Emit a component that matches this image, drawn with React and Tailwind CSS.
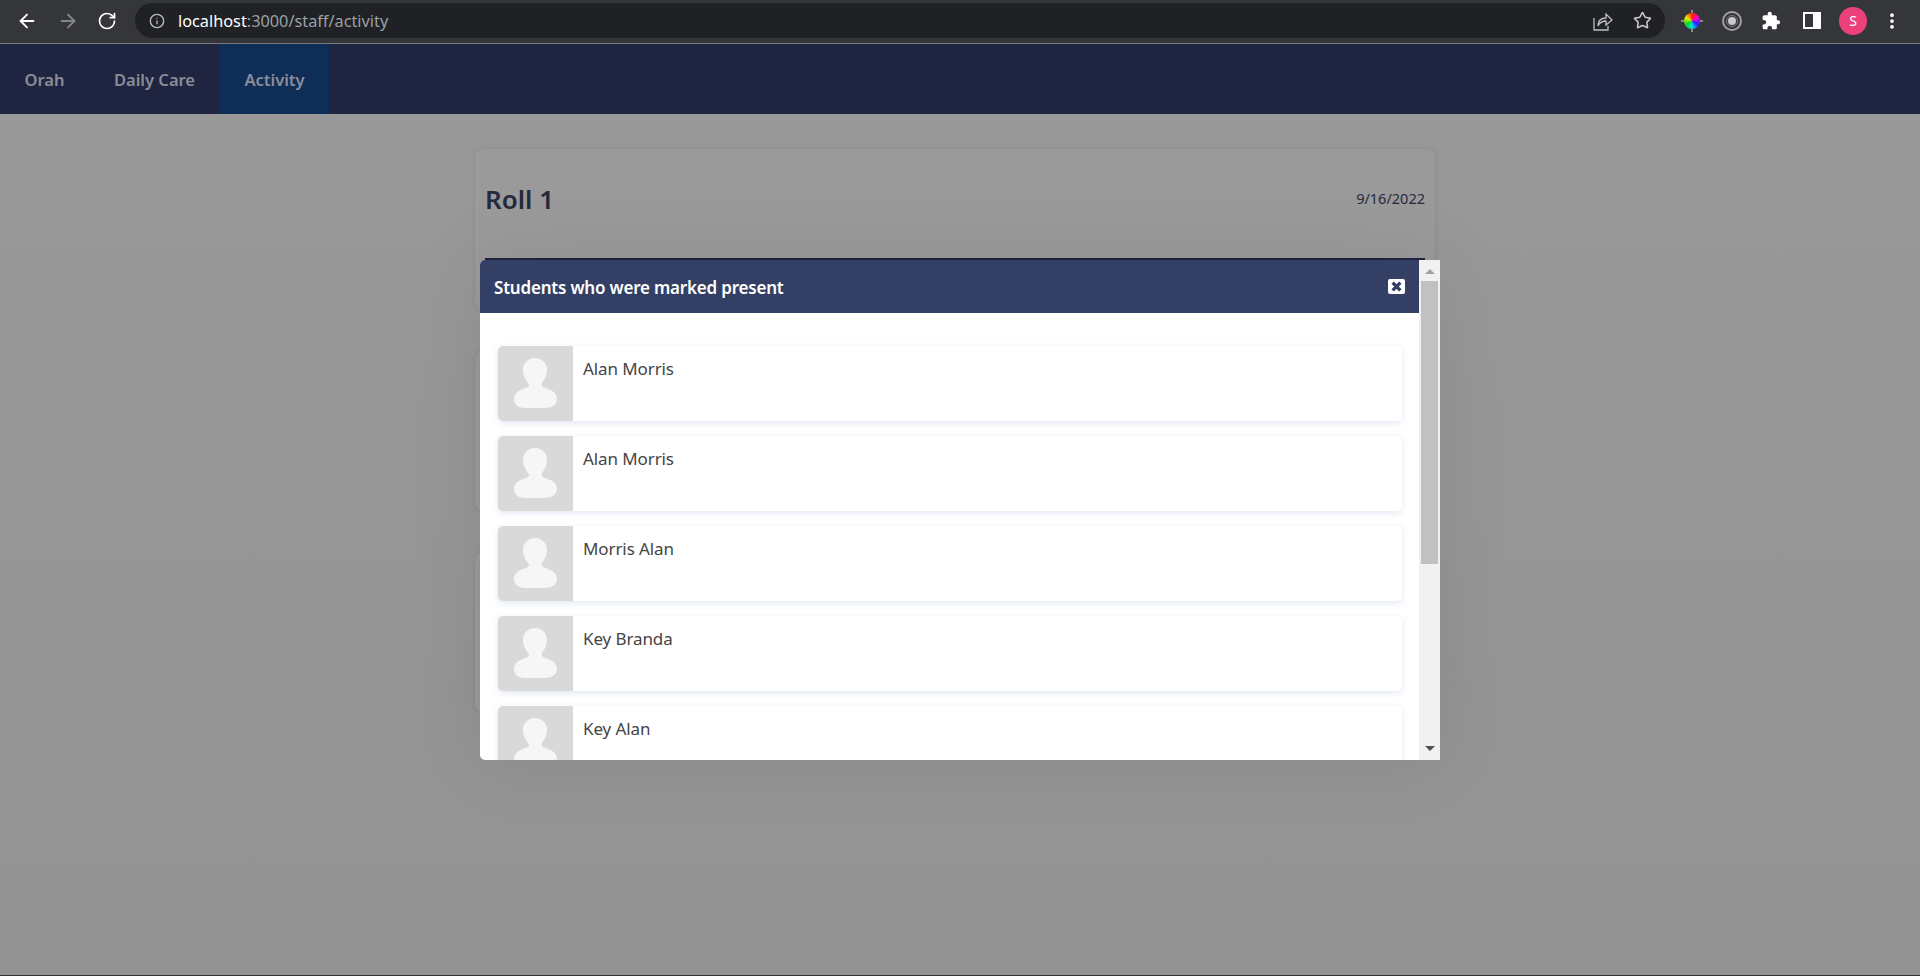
import React from 'react'
import { ArrowLeft, ArrowRight, RotateCw, Info, Star, EllipsisVertical } from 'lucide-react'
import { MdExtension } from 'react-icons/md'

const students = ['Alan Morris', 'Alan Morris', 'Morris Alan', 'Key Branda', 'Key Alan']

const Avatar = () => (
  <svg viewBox="0 0 75 75" className="w-[75px] h-[75px] shrink-0 rounded-l-[5px] bg-[#d9d9d9]">
    <path
      d="M37 12C44 12 49 17 49 24C49 30 46 34 44 37C43 39 44 41 47 42C54 44 59 47 59 53C59 59 53 62 47 62H27C21 62 16 59 16 53C16 47 21 44 28 42C31 41 32 39 30 37C28 34 25 30 25 24C25 17 30 12 37 12Z"
      fill="#f6f6f6"
    />
  </svg>
)

const StudentRow = ({ name }) => (
  <div className="flex h-[75px] shrink-0 rounded-[5px] bg-white shadow-[0_2px_7px_rgba(90,120,190,0.18)]">
    <Avatar />
    <p className="pl-[10px] pt-[9px] text-[17px] leading-[28px] tracking-[-0.1px] text-[#444]">{name}</p>
  </div>
)

const ColorWheel = () => (
  <div className="relative h-[16px] w-[16px] rounded-full bg-[conic-gradient(#f20,#f0c,#22f,#0dd,#0d2,#ee0,#f20)]">
    <span className="absolute left-[7px] top-[-3px] h-[3px] w-[2px] bg-[#8a8a8a]" />
    <span className="absolute left-[7px] bottom-[-3px] h-[3px] w-[2px] bg-[#8a8a8a]" />
    <span className="absolute left-[-3px] top-[7px] h-[2px] w-[3px] bg-[#8a8a8a]" />
    <span className="absolute right-[-3px] top-[7px] h-[2px] w-[3px] bg-[#8a8a8a]" />
  </div>
)

const ShareIcon = () => (
  <svg viewBox="0 0 20 20" fill="none" stroke="#bcbec1" strokeWidth="1.300" className="h-[20px] w-[20px]">
    <path d="M1 7v12h14v-4" />
    <path d="M5 15c0-5 3-8 8-8V3l6 6-6 5v-4c-4 0-6 1-8 5z" />
  </svg>
)

const BrowserBar = () => (
  <div className="flex h-[44px] items-center border-b border-[#77787a] bg-[#35363a] pb-[2px] pl-[16px]">
    <ArrowLeft size={22} strokeWidth={2} className="text-white" />
    <ArrowRight size={22} strokeWidth={2} className="ml-[19px] text-[#85878a]" />
    <RotateCw size={20} strokeWidth={2} className="ml-[18px] text-white" />
    <div className="ml-[18px] flex h-[35px] w-[1530px] items-center rounded-full bg-[#202124] pl-[14px]">
      <Info size={16} strokeWidth={2} className="text-[#bcbec1]" />
      <p className="ml-[13px] pt-[1px] text-[16.300px] text-[#9aa0a6]"><span className="text-white">localhost</span>:3000/staff/activity</p>
      <div className="ml-auto"><ShareIcon /></div>
      <Star size={19} className="ml-[20px] mr-[13px] text-[#c8c9cb]" />
    </div>
    <div className="ml-[19px]"><ColorWheel /></div>
    <div className="ml-[22px] flex h-[20px] w-[20px] items-center justify-center rounded-full border-2 border-[#a0a1a3]">
      <div className="flex h-[12px] w-[12px] items-center justify-center rounded-full border border-[#77787a]">
        <div className="h-[8px] w-[8px] rounded-full bg-[#c8c9cb]" />
      </div>
    </div>
    <MdExtension size={20} className="ml-[19px] text-white" />
    <div className="ml-[22px] flex h-[17px] w-[18px] justify-end border-2 border-white"><div className="h-full w-[6px] bg-white" /></div>
    <div className="ml-[18px] flex h-[28px] w-[28px] items-center justify-center rounded-full bg-[#ec407a] text-[14px] text-white">S</div>
    <EllipsisVertical size={20} strokeWidth={2.500} className="ml-[15px] text-white" />
  </div>
)

const NavBar = () => (
  <div className="flex h-[70px] bg-[#1f2540] text-[16.500px] font-semibold text-[#8b8d98]">
    <div className="flex w-[89px] items-center justify-center pt-[2px]">Orah</div>
    <div className="flex w-[131px] items-center justify-center pt-[2px]">Daily Care</div>
    <div className="flex w-[109px] items-center justify-center bg-[#0e2e58] pt-[2px]">Activity</div>
  </div>
)

const Page = () => (
  <div className="flex flex-col items-center gap-[41px] pr-[10px] pt-[35px]">
    <div className="h-[161px] w-[960px] rounded-[8px] bg-[#9a9a9a] px-[10px] shadow-[0_0_4px_rgba(0,0,0,0.1)]">
      <div className="flex h-[111px] items-center justify-between border-b-2 border-[#1f2540] pb-[8px]">
        <h1 className="text-[26px] font-semibold text-[#262a40]">Roll 1</h1>
        <p className="pb-[2px] text-[14.500px] text-[#262a40]">9/16/2022</p>
      </div>
    </div>
    <div className="h-[160px] w-[960px] rounded-[8px] bg-[#9a9a9a] shadow-[0_0_4px_rgba(0,0,0,0.1)]" />
    <div className="h-[160px] w-[960px] rounded-[8px] bg-[#9a9a9a] shadow-[0_0_4px_rgba(0,0,0,0.1)]" />
  </div>
)

const Modal = () => (
  <div className="absolute left-[480px] top-[260px] flex h-[500px] w-[960px] overflow-hidden rounded-l-[5px] bg-white shadow-[0_0_80px_rgba(0,0,0,0.08)]">
    <div className="flex min-w-0 flex-1 flex-col">
      <div className="flex h-[53px] shrink-0 items-center justify-between bg-[#333f64] pl-[14px] pr-[14px]">
        <h2 className="pt-[2px] text-[17px] font-semibold tracking-[-0.2px] text-white">Students who were marked present</h2>
        <div className="flex h-[15px] w-[17px] items-center justify-center rounded-[2px] bg-white text-[#333f64]">
          <svg viewBox="0 0 10 10" className="h-[11px] w-[11px]"><path d="M1.500 1.500l7 7M8.500 1.500l-7 7" stroke="currentColor" strokeWidth="3" /></svg>
        </div>
      </div>
      <div className="flex flex-col gap-[15px] overflow-hidden pl-[18px] pr-[17px] pt-[33px]">
        {students.map((name, i) => <StudentRow key={i} name={name} />)}
      </div>
    </div>
    <div className="flex w-[21px] shrink-0 flex-col items-center bg-[#f1f1f1]">
      <div className="mt-[9px] h-0 w-0 border-x-[5px] border-b-[5px] border-x-transparent border-b-[#a3a3a3]" />
      <div className="mt-[7px] h-[283px] w-[17px] bg-[#c1c1c1]" />
      <div className="mt-auto mb-[9px] h-0 w-0 border-x-[5px] border-t-[5px] border-x-transparent border-t-[#505050]" />
    </div>
  </div>
)

export default function App() {
  return (
    <div className="relative h-[976px] overflow-hidden border-b border-[#333] bg-linear-to-b from-[#999] to-[#939393] font-['Noto_Sans',sans-serif]">
      <BrowserBar />
      <NavBar />
      <Page />
      <Modal />
    </div>
  )
}
